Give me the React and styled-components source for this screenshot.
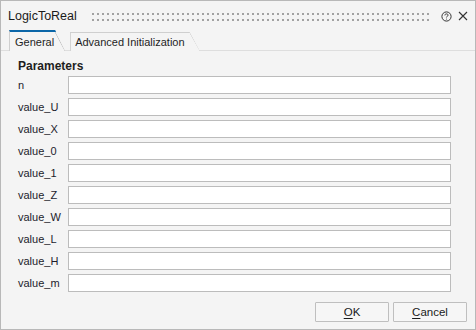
import React from "react";
import styled, { createGlobalStyle } from "styled-components";

const GlobalStyle = createGlobalStyle`
  html, body {
    margin: 0;
    padding: 0;
    background: #f4f4f4;
  }
  * {
    box-sizing: border-box;
  }
`;

let Dialog = styled.div`
  width: 476px;
  height: 330px;
  display: flex;
  flex-direction: column;
  background-color: #f4f4f4;
  border: 1px solid #b8b8b8;
  font-family: "Liberation Sans", Arial, sans-serif;
  color: #1e1e1e;
`;
let TitleBar = styled.div`
  height: 28px;
  display: flex;
  align-items: center;
  padding: 2px 5px 0 7px;
`;
let Title = styled.span`
  font-size: 12.5px;
  color: #1a1a1a;
`;
let Grip = styled.div`
  flex: 1;
  height: 8px;
  margin: 1px 7px 0 15px;
  background-image: repeating-linear-gradient(90deg, #a2a2a2 0 2px, transparent 2px 5px);
  mask-image: repeating-linear-gradient(180deg, #000 0 2px, transparent 2px 6px);
  -webkit-mask-image: repeating-linear-gradient(180deg, #000 0 2px, transparent 2px 6px);
`;
let IconButton = styled.span`
  width: 14px;
  height: 14px;
  display: flex;
  align-items: center;
  justify-content: center;
  margin-left: ${(p) => p.gap || 0}px;
  color: #333;
`;
let TabStrip = styled.div`
  height: 22px;
  display: flex;
  align-items: flex-end;
  gap: 5px;
  padding-left: 8px;
  border-bottom: 1px solid #dedede;
`;
let Tab = styled.div`
  position: relative;
  height: ${(p) => (p.active ? 21 : 19)}px;
  display: flex;
  align-items: center;
  padding: 0 ${(p) => (p.active ? 11 : 15)}px 0 ${(p) => (p.active ? 5 : 4)}px;
  margin-bottom: -1px;
  font-size: 11px;
  color: #1e1e1e;
  background-color: #f4f4f4;
  border-left: 1px solid #cfcfcf;
  border-top: ${(p) => (p.active ? "2px solid #0b66a8" : "1px solid #cfcfcf")};
  clip-path: polygon(0 0, calc(100% - 10px) 0, 100% 100%, 0 100%);

  &::after {
    content: "";
    position: absolute;
    top: 0;
    right: 0;
    width: 10px;
    height: 100%;
    background: linear-gradient(
      to top right,
      transparent calc(50% - 0.7px),
      #c4c4c4 50%,
      transparent calc(50% + 0.7px)
    );
  }
`;
let Panel = styled.div`
  flex: 1;
  display: flex;
  flex-direction: column;
  padding: 7px 24px 0 16px;
`;
let SectionTitle = styled.div`
  font-size: 12px;
  font-weight: bold;
  line-height: 16px;
  margin-bottom: 2px;
  padding-left: 1px;
`;
let Rows = styled.div`
  display: flex;
  flex-direction: column;
  gap: 4px;
`;
let Row = styled.div`
  display: grid;
  grid-template-columns: 51px 1fr;
  align-items: center;
  height: 18px;
`;
let Label = styled.label`
  font-size: 11px;
  padding-left: 1px;
  color: #1c1c2c;
`;
let TextInput = styled.input`
  height: 18px;
  width: 100%;
  margin: 0;
  border: 1px solid #bcbcbc;
  background: #fff;
  outline: none;
  padding: 0 3px;
  font-family: inherit;
  font-size: 11px;
`;
let Footer = styled.div`
  display: flex;
  justify-content: flex-end;
  gap: 4px;
  padding: 0 8px 7px 0;
`;
let Button = styled.button`
  width: 74px;
  height: 20px;
  margin: 0;
  padding: 0;
  font-family: inherit;
  font-size: 11.5px;
  color: #1a1a1a;
  background-color: #f6f6f6;
  border: 1px solid #bfbfbf;
  border-radius: 1px;

  & u {
    text-underline-offset: 2px;
  }
`;

const params = [
  "n",
  "value_U",
  "value_X",
  "value_0",
  "value_1",
  "value_Z",
  "value_W",
  "value_L",
  "value_H",
  "value_m",
];

function HelpIcon() {
  return (
    <svg width="11" height="11" viewBox="0 0 11 11" fill="none" stroke="#333" strokeWidth="1">
      <circle cx="5.5" cy="5.5" r="4.6" />
      <path d="M3.9 4.4 C3.9 3.4 4.6 2.9 5.5 2.9 C6.4 2.9 7.1 3.4 7.1 4.2 C7.1 5.2 5.5 5.2 5.5 6.4" />
      <circle cx="5.5" cy="8" r="0.5" fill="#333" stroke="none" />
    </svg>
  );
}

function CloseIcon() {
  return (
    <svg width="10" height="10" viewBox="0 0 10 10" stroke="#333" strokeWidth="1.1">
      <path d="M1 1 L9 9 M9 1 L1 9" />
    </svg>
  );
}

function App() {
  let [values, setValues] = React.useState({});

  return (
    <>
      <GlobalStyle />
      <Dialog>
        <TitleBar>
          <Title>LogicToReal</Title>
          <Grip />
          <IconButton>
            <HelpIcon />
          </IconButton>
          <IconButton gap={3}>
            <CloseIcon />
          </IconButton>
        </TitleBar>

        <TabStrip>
          <Tab active>General</Tab>
          <Tab>Advanced Initialization</Tab>
        </TabStrip>

        <Panel>
          <SectionTitle>Parameters</SectionTitle>
          <Rows>
            {params.map((name) => (
              <Row key={name}>
                <Label>{name}</Label>
                <TextInput
                  value={values[name] || ""}
                  onChange={(e) => setValues({ ...values, [name]: e.target.value })}
                />
              </Row>
            ))}
          </Rows>
        </Panel>

        <Footer>
          <Button>
            <u>O</u>K
          </Button>
          <Button>
            <u>C</u>ancel
          </Button>
        </Footer>
      </Dialog>
    </>
  );
}

export default App;
